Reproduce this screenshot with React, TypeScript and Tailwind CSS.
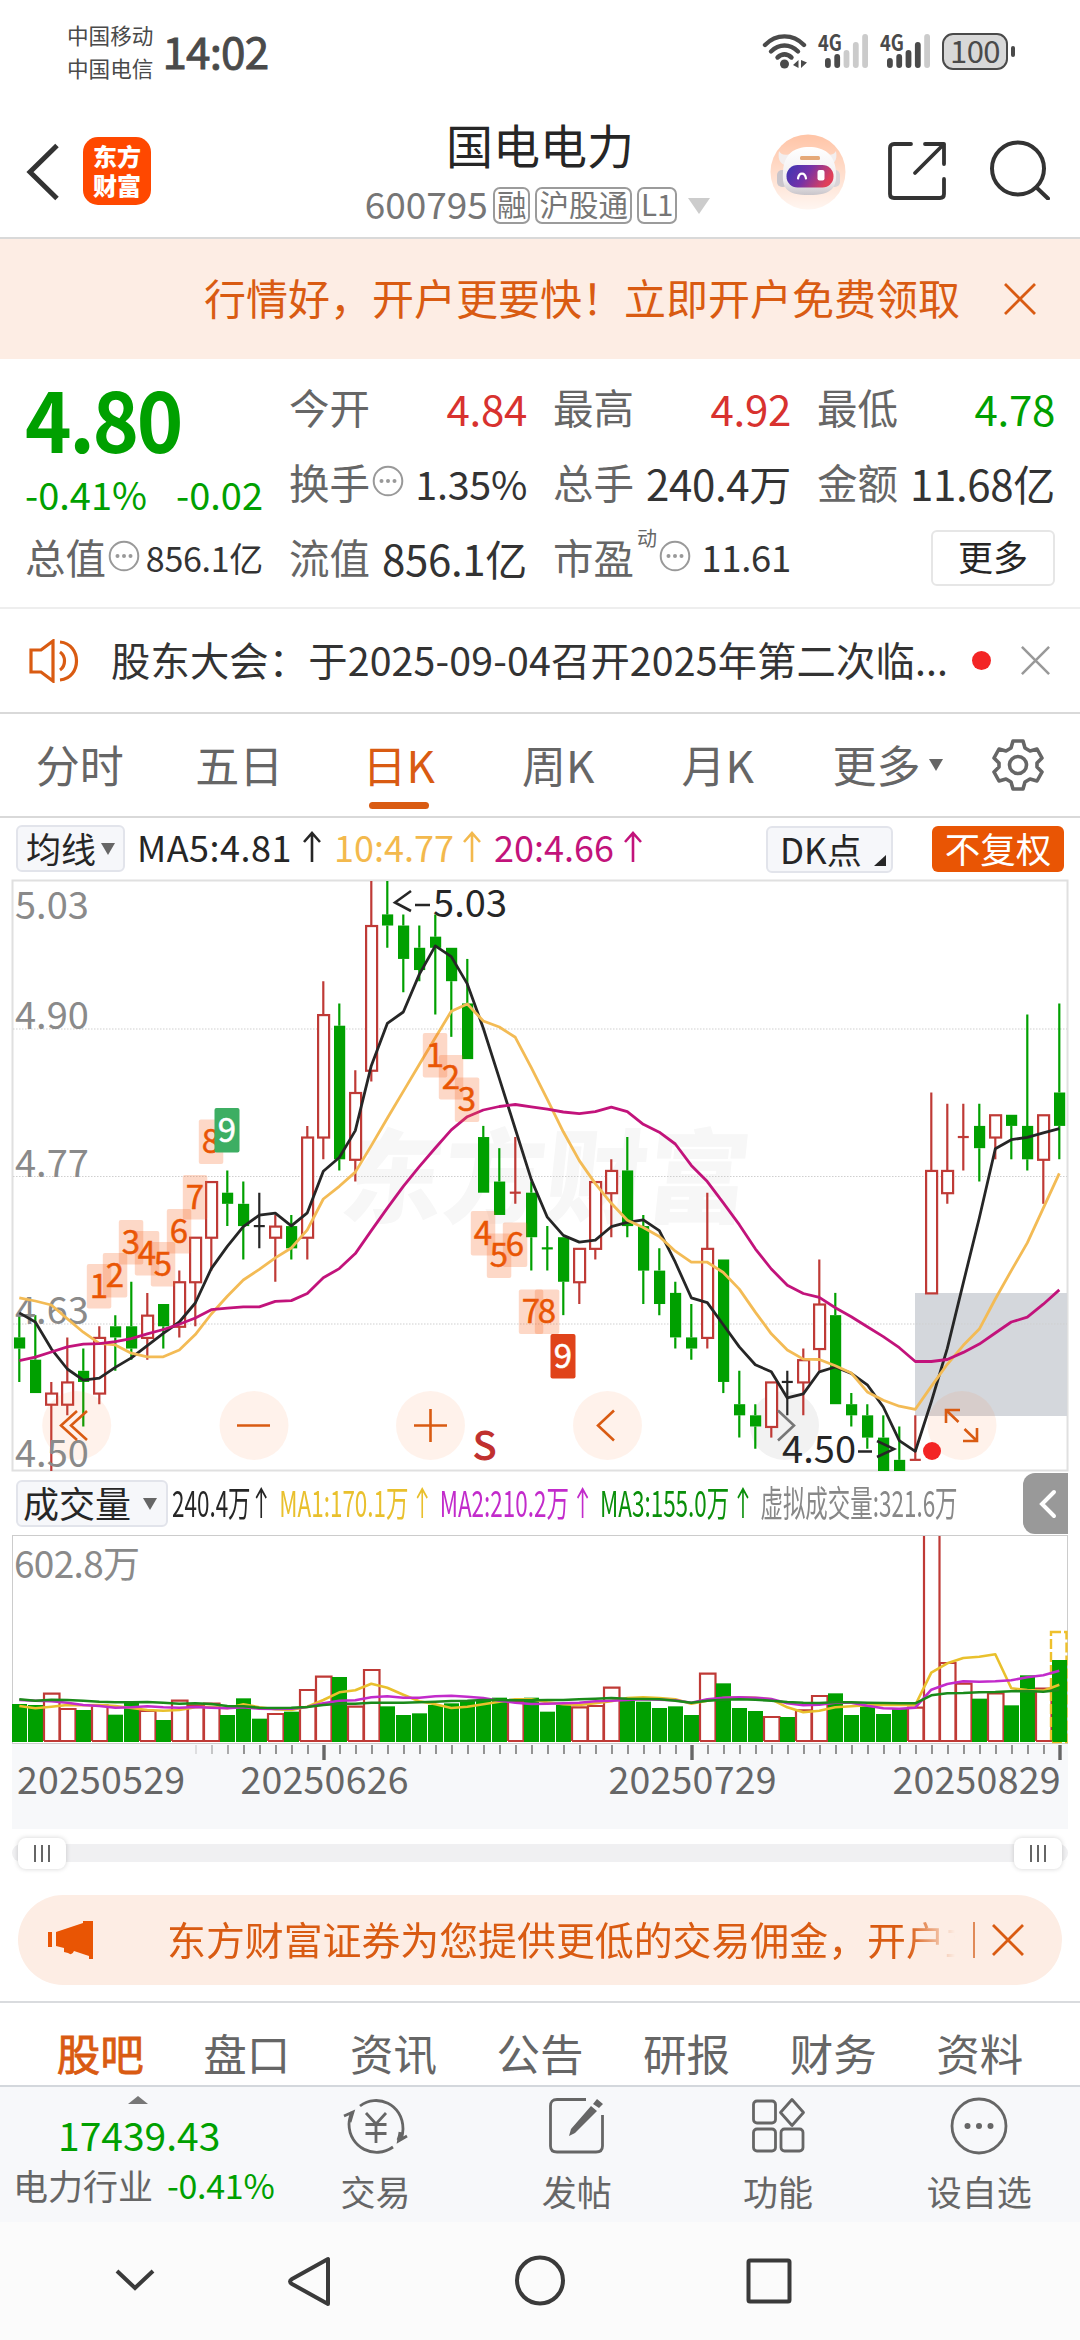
import type { ReactNode } from "react";
import clsx from "clsx";

type Kind = "up" | "down" | "flat";
// high, low, body top, body bottom (all in cents), kind
type Candle = [number, number, number, number, Kind];

const candles: Candle[] = [
    [464, 458, 462, 461, "down"],
    [464, 457, 460, 457, "down"],
    [458, 450, 457, 456, "up"],
    [462, 455, 458, 456, "up"],
    [461, 454, 459, 458, "down"],
    [463, 456, 462, 457, "up"],
    [464, 459, 463, 462, "down"],
    [467, 460, 463, 461, "down"],
    [466, 460, 464, 462, "up"],
    [465, 461, 465, 463, "down"],
    [468, 462, 467, 463, "up"],
    [471, 463, 471, 467, "up"],
    [476, 468, 476, 471, "up"],
    [477, 472, 475, 474, "down"],
    [476, 469, 474, 472, "down"],
    [475, 470, 472, 472, "flat"],
    [473, 467, 472, 471, "up"],
    [473, 469, 472, 470, "down"],
    [481, 469, 480, 471, "up"],
    [494, 478, 491, 480, "up"],
    [492, 477, 490, 478, "down"],
    [486, 476, 484, 478, "up"],
    [503, 485, 499, 486, "up"],
    [503, 497, 500, 499, "down"],
    [500, 493, 499, 496, "down"],
    [499, 494, 497, 495, "down"],
    [500, 491, 498, 497, "down"],
    [497, 489, 497, 494, "down"],
    [496, 487, 492, 487, "down"],
    [481, 475, 480, 475, "down"],
    [479, 473, 476, 473, "down"],
    [480, 474, 475, 475, "up"],
    [476, 468, 475, 471, "down"],
    [472, 468, 470, 470, "down"],
    [471, 464, 471, 467, "down"],
    [470, 465, 470, 467, "up"],
    [476, 469, 476, 470, "up"],
    [478, 471, 477, 475, "up"],
    [480, 471, 477, 472, "down"],
    [473, 465, 472, 468, "down"],
    [470, 464, 468, 465, "down"],
    [467, 461, 466, 462, "down"],
    [465, 460, 462, 461, "down"],
    [475, 461, 470, 462, "up"],
    [469, 457, 469, 458, "down"],
    [459, 453, 456, 455, "down"],
    [456, 452, 455, 454, "down"],
    [458, 453, 458, 454, "up"],
    [459, 455, 458, 458, "flat"],
    [461, 455, 460, 458, "up"],
    [469, 459, 465, 461, "up"],
    [466, 456, 464, 456, "down"],
    [457, 454, 456, 455, "down"],
    [456, 452, 455, 453, "down"],
    [455, 450, 453, 450, "down"],
    [454, 450, 451, 450, "down"],
    [455, 451, 451, 451, "up"],
    [484, 466, 477, 466, "up"],
    [483, 474, 477, 475, "up"],
    [483, 477, 480, 480, "up"],
    [483, 476, 481, 479, "down"],
    [482, 478, 482, 480, "up"],
    [482, 478, 482, 481, "down"],
    [491, 477, 481, 478, "down"],
    [482, 474, 482, 478, "up"],
    [492, 478, 484, 481, "down"],
];

const ma5 = [1120, 1143, 1211, 1262, 1290, 1285, 1258, 1234, 1203, 1172, 1143, 1095, 1008, 952, 902, 873, 868, 900, 867, 762, 727, 659, 495, 388, 359, 264, 192, 219, 288, 400, 527, 655, 783, 878, 924, 941, 936, 902, 891, 885, 912, 992, 1082, 1094, 1150, 1206, 1251, 1269, 1335, 1325, 1269, 1257, 1273, 1302, 1358, 1443, 1470, 1345, 1210, 1044, 880, 705, 682, 676, 665, 654];
const ma10 = [1082, 1090, 1100, 1135, 1169, 1197, 1201, 1222, 1231, 1231, 1214, 1175, 1123, 1078, 1037, 1010, 981, 956, 910, 832, 800, 764, 697, 628, 560, 492, 424, 357, 339, 382, 397, 423, 500, 580, 662, 735, 793, 843, 886, 904, 927, 964, 992, 992, 1018, 1060, 1118, 1173, 1214, 1237, 1238, 1254, 1272, 1320, 1341, 1356, 1364, 1306, 1250, 1202, 1161, 1085, 1013, 943, 855, 767];
const ma20 = [1241, 1232, 1219, 1206, 1199, 1198, 1193, 1185, 1173, 1162, 1149, 1133, 1112, 1108, 1105, 1105, 1091, 1089, 1071, 1031, 1008, 970, 912, 855, 800, 750, 703, 657, 624, 607, 598, 593, 599, 605, 612, 616, 611, 600, 611, 643, 663, 693, 747, 788, 842, 897, 958, 1009, 1050, 1071, 1081, 1107, 1130, 1155, 1180, 1208, 1243, 1243, 1238, 1220, 1199, 1171, 1143, 1131, 1098, 1062];

const volumes = [732, 735, 698, 744, 750, 733, 764, 724, 750, 780, 719, 733, 728, 765, 715, 776, 759, 755, 687, 647, 651, 737, 627, 739, 765, 760, 735, 730, 722, 722, 713, 722, 713, 755, 735, 739, 735, 680, 722, 725, 744, 739, 765, 638, 670, 744, 753, 768, 771, 748, 705, 700, 765, 737, 762, 745, 740, 220, 606, 668, 716, 697, 736, 646, 683, 600];
const vol1 = [738, 745, 740, 735, 736, 735, 738, 744, 750, 752, 750, 742, 740, 745, 733, 742, 748, 750, 740, 720, 697, 691, 671, 683, 704, 724, 733, 744, 740, 733, 725, 718, 718, 727, 733, 735, 730, 724, 714, 712, 714, 718, 731, 722, 714, 712, 713, 718, 742, 757, 752, 742, 739, 736, 735, 735, 735, 638, 610, 594, 590, 583, 685, 690, 692, 674];
const vol2 = [720, 722, 724, 728, 735, 738, 743, 742, 739, 742, 743, 741, 743, 745, 742, 746, 747, 746, 741, 730, 722, 721, 712, 709, 713, 713, 709, 707, 710, 714, 722, 728, 732, 731, 730, 728, 724, 722, 720, 718, 719, 721, 728, 718, 713, 712, 713, 717, 730, 736, 734, 728, 728, 737, 745, 746, 743, 689, 672, 664, 665, 664, 661, 652, 646, 632];
const vol3 = [718, 722, 719, 720, 722, 725, 727, 727, 726, 728, 731, 730, 732, 738, 739, 743, 744, 743, 741, 735, 731, 731, 728, 728, 728, 727, 725, 723, 722, 720, 720, 721, 721, 720, 720, 718, 716, 714, 716, 717, 718, 722, 728, 722, 719, 718, 719, 722, 726, 728, 729, 727, 727, 728, 729, 730, 730, 706, 700, 699, 697, 696, 694, 693, 695, 690];

const RED = "#bf3a36";
const GREEN = "#00a000";
const INK = "#262626";
const ORANGE = "#d95b12";

const cx = (i: number) => 19.3 + 16 * i;
const priceY = (p: number) => 881 + (503 - p) * 11.132;
const volY = (v: number) => 1460 + v / 3;
const maLine = (data: number[]) => data.map((v, i) => `${cx(i)},${(870 + v / 2.529).toFixed(1)}`).join(" ");
const volLine = (data: number[]) => data.map((v, i) => `${cx(i)},${volY(v).toFixed(1)}`).join(" ");
const color = (k: Kind) => (k === "up" ? RED : k === "down" ? GREEN : INK);

// nine-turn counters: candle index, top, digit
const turns: [number, number, string][] = [
    [5, 1264, "1"],
    [6, 1253, "2"],
    [7, 1220, "3"],
    [8, 1231, "4"],
    [9, 1242, "5"],
    [10, 1209, "6"],
    [11, 1175, "7"],
    [12, 1119.5, "8"],
    [26, 1033, "1"],
    [27, 1055, "2"],
    [28, 1077.5, "3"],
    [29, 1211, "4"],
    [30, 1233.5, "5"],
    [31, 1222.5, "6"],
    [32, 1289.5, "7"],
    [33, 1289.5, "8"],
];

function Arrow({ className }: { className?: string }) {
    return (
        <svg viewBox="0 0 20 32" className={clsx("h-8 w-5 shrink-0", className)} fill="none" stroke="currentColor" strokeWidth="2.6">
            <path d="M10 31V2M2 11L10 2L18 11" />
        </svg>
    );
}

function Close({ className }: { className?: string }) {
    return (
        <svg viewBox="0 0 32 32" className={className} fill="none" stroke="currentColor" strokeWidth="2.8">
            <path d="M1 1L31 31M31 1L1 31" />
        </svg>
    );
}

function Info() {
    return (
        <svg viewBox="0 0 32 32" className="mb-[3px] ml-[2px] h-8 w-8 shrink-0 text-[#999]" fill="none" stroke="currentColor" strokeWidth="2">
            <circle cx="16" cy="16" r="14.3" />
            <g fill="currentColor" stroke="none">
                <circle cx="9.5" cy="16" r="2" />
                <circle cx="16" cy="16" r="2" />
                <circle cx="22.5" cy="16" r="2" />
            </g>
        </svg>
    );
}

function Signal({ active }: { active: number }) {
    return (
        <svg viewBox="0 0 52 36" className="mr-[10px] h-9 w-[52px] overflow-visible">
            <text x="0" y="17.5" fontSize="22" fontWeight="700" fill="#4a4a4a" textLength="24" lengthAdjust="spacingAndGlyphs">
                4G
            </text>
            {[10, 14, 18, 26, 34].map((h, i) => (
                <rect key={i} x={7 + i * 9.3} y={35 - h} width="5.8" height={h} rx="2.9" fill={i < active ? "#4a4a4a" : "#cbcbcb"} />
            ))}
        </svg>
    );
}

function StatusBar() {
    return (
        <div className="flex h-[106px] items-start pl-[67px] text-[#4a4a4a]">
            <div className="flex flex-col gap-[11px] pt-[24px] text-[21.6px] leading-[22px]">
                <span>中国移动</span>
                <span>中国电信</span>
            </div>
            <div className="pt-[28px] pl-[9px] text-[44px] leading-[44px] tracking-[-0.8px] [-webkit-text-stroke:0.9px_#4a4a4a]">14:02</div>
            <div className="ml-auto flex items-start pt-[33px] pr-[65px]">
                <svg viewBox="0 0 46 36" className="mr-[10px] h-9 w-[46px]" fill="none" stroke="#4a4a4a" strokeWidth="4.4" strokeLinecap="round">
                    <path d="M3 12C14 .5 31 .5 42 12" />
                    <path d="M9 18.500C17 10.500 28 10.500 36 18.500" />
                    <path d="M15.500 24.500C20 20.500 25 20.500 29.500 24.500" />
                    <circle cx="22.500" cy="31" r="4.500" fill="#4a4a4a" stroke="none" />
                    <path d="M36.500 27V35L31 32ZM39 27V35L45 29.500Z" fill="#4a4a4a" stroke="none" />
                </svg>
                <Signal active={2} />
                <Signal active={4} />
                <div className="flex h-9 items-center">
                    <div className="flex h-[37px] w-[66px] items-center justify-center rounded-[11px] border-2 border-[#4a4a4a] bg-[#d8d8d8] pb-[3px] text-[31px] leading-none tracking-[-0.5px]">
                        100
                    </div>
                    <div className="ml-[3px] h-[11px] w-1 rounded-full bg-[#4a4a4a]" />
                </div>
            </div>
        </div>
    );
}

function Robot() {
    return (
        <svg viewBox="0 0 76 76" className="h-[76px] w-[76px]">
            <defs>
                <linearGradient id="halo" x1="0" y1="0" x2="0" y2="1">
                    <stop offset="0" stopColor="#ffc4a6" />
                    <stop offset="1" stopColor="#fff6f1" />
                </linearGradient>
                <linearGradient id="visor" x1="0" y1="0" x2="1" y2="0.3">
                    <stop offset="0" stopColor="#3a35b4" />
                    <stop offset="0.5" stopColor="#7432a8" />
                    <stop offset="1" stopColor="#e0405a" />
                </linearGradient>
                <linearGradient id="shell" x1="0" y1="0" x2="0" y2="1">
                    <stop offset="0" stopColor="#ffffff" />
                    <stop offset="0.7" stopColor="#f0edef" />
                    <stop offset="1" stopColor="#c9c5ca" />
                </linearGradient>
            </defs>
            <circle cx="38" cy="38" r="37.500" fill="url(#halo)" />
            <path d="M9 17C7 27 12 31 18 32L24 19C15 22 11 21 9 17ZM66 17C68 27 63 31 57 32L51 19C60 22 64 21 66 17Z" fill="#f3eeee" />
            <rect x="7" y="36" width="11" height="17" rx="5" fill="#c9c5cb" />
            <rect x="59" y="36" width="11" height="17" rx="5" fill="#d8d4d8" />
            <path d="M13 38C14 20 24 13 39 13C54 13 65 20 66 38C67 54 62 61 39 61C16 61 12 54 13 38Z" fill="url(#shell)" />
            <rect x="30" y="22" width="20" height="4" rx="1.500" fill="#e5a878" />
            <rect x="16.500" y="31" width="47" height="22.500" rx="11" fill="url(#visor)" />
            <path d="M28 44.500C29 38 35 38 36 44.500" fill="none" stroke="#fff" strokeWidth="2.200" strokeLinecap="round" />
            <rect x="47.500" y="36" width="7" height="10.500" rx="2" fill="#fff" />
        </svg>
    );
}

function Tag({ children }: { children: ReactNode }) {
    return (
        <span className="flex h-[37px] items-center rounded-[7px] border-2 border-[#9b9b9b] px-[2px] pb-[3px] text-[29.5px] leading-none">
            {children}
        </span>
    );
}

function Header() {
    return (
        <div className="flex h-[133px] border-b-2 border-[#d9d9d9]">
            <div className="flex w-[330px] items-start pt-[31px] pl-[26px]">
                <svg viewBox="0 0 34 58" className="mt-[6px] h-[58px] w-[34px]" fill="none" stroke="#333" strokeWidth="5">
                    <path d="M31 2.500L4 29L31 55.500" />
                </svg>
                <div className="ml-[23px] flex h-[68px] w-[68px] flex-col items-center justify-center rounded-[15px] bg-[#ff4800] pb-[3px] text-[24px] leading-[29px] font-black text-white">
                    <span>东方</span>
                    <span>财富</span>
                </div>
            </div>
            <div className="flex w-[420px] flex-col items-center pt-[14px]">
                <div className="text-[47px] leading-[48px] text-[#262626]">国电电力</div>
                <div className="mt-[17px] flex items-center gap-[5px] pr-[5px] text-[#767676]">
                    <span className="pb-1 text-[37px] leading-[37px]">600795</span>
                    <Tag>融</Tag>
                    <Tag>沪股通</Tag>
                    <Tag>L1</Tag>
                    <svg viewBox="0 0 22 16" className="ml-[6px] h-4 w-[22px]">
                        <path d="M0 0H22L11 16Z" fill="#ccc" />
                    </svg>
                </div>
            </div>
            <div className="flex flex-1 items-start pt-[28px] pl-[20px]">
                <Robot />
                <svg viewBox="0 0 60 60" className="mt-[7px] ml-[41px] h-[60px] w-[60px]" fill="none" stroke="#333" strokeWidth="3.800" strokeLinecap="round" strokeLinejoin="round">
                    <path d="M24 3H7Q3 3 3 7V53Q3 57 7 57H53Q57 57 57 53V38" />
                    <path d="M38 3H57V23M57 3L28 32" />
                </svg>
                <svg viewBox="0 0 60 60" className="mt-[6px] ml-[43px] h-[60px] w-[60px]" fill="none" stroke="#333" strokeWidth="4" strokeLinecap="round">
                    <circle cx="28" cy="28.500" r="26" />
                    <path d="M47 48L58 58.500" />
                </svg>
            </div>
        </div>
    );
}

function Banner() {
    return (
        <div className="flex h-[120px] items-center bg-[#fdede4] pb-[1px] pl-[204px] text-[#d95b12]">
            <span className="w-[800px] pb-[4px] text-[42px] leading-none whitespace-nowrap">行情好，开户更要快！立即开户免费领取</span>
            <Close className="h-8 w-8" />
        </div>
    );
}

function Cell({ label, value, extra, tone = "text-[#333]", size = "text-[42px]" }: { label: string; value: string; extra?: ReactNode; tone?: string; size?: string }) {
    return (
        <div className="flex h-[75px] items-center whitespace-nowrap">
            <span className="text-[40.500px] text-[#666]">{label}</span>
            {extra}
            <span className={clsx("ml-auto tracking-[-0.300px]", tone, size)}>{value}</span>
        </div>
    );
}

function Quote() {
    return (
        <div className="grid h-[250px] grid-cols-[238px_238px_238px_238px] content-start gap-x-[26px] border-b-2 border-[#eee] pt-[11px] pl-[25px] leading-none">
            <div className="row-span-2 flex flex-col text-[#00a000]">
                <div className="mt-[5px] origin-left scale-x-[.94] text-[84px] leading-[84px] font-bold tracking-[-2.500px]">4.80</div>
                <div className="mt-[16px] flex justify-between text-[38px] leading-[38px]">
                    <span>-0.41%</span>
                    <span>-0.02</span>
                </div>
            </div>
            <Cell label="今开" value="4.84" tone="text-[#d8322f]" />
            <Cell label="最高" value="4.92" tone="text-[#d8322f]" />
            <Cell label="最低" value="4.78" tone="text-[#00a000]" />
            <Cell label="换手" value="1.35%" extra={<Info />} size="text-[39.500px]" />
            <Cell label="总手" value="240.4万" />
            <Cell label="金额" value="11.68亿" />
            <Cell label="总值" value="856.1亿" extra={<Info />} size="text-[34px]" />
            <Cell label="流值" value="856.1亿" />
            <Cell
                label="市盈"
                value="11.61"
                size="text-[36.500px]"
                extra={
                    <>
                        <sup className="top-0 ml-[3px] self-start pt-[8px] text-[20px] leading-none text-[#666]">动</sup>
                        <Info />
                    </>
                }
            />
            <div className="flex h-[75px] items-center justify-end">
                <span className="flex h-[56px] w-[124px] items-center justify-center rounded-[6px] border-2 border-[#e6e6e6] pb-[4px] text-[35px] text-[#262626]">更多</span>
            </div>
        </div>
    );
}

function News() {
    return (
        <div className="flex h-[105px] items-center border-b-2 border-[#d9d9d9] pl-[29px]">
            <svg viewBox="0 0 52 44" className="h-11 w-[52px]" fill="none" stroke={ORANGE} strokeWidth="3.200">
                <path d="M2 11H12L24 2V42L12 33H2Z" />
                <path d="M31 13C37 17 37 27 31 31M31 3C53 5 53 39 31 41" />
            </svg>
            <span className="ml-[30px] w-[840px] pb-[4px] text-[39.300px] leading-none tracking-[0.150px] whitespace-nowrap text-[#333]">
                股东大会：于2025-09-04召开2025年第二次临...
            </span>
            <span className="ml-[21px] h-[19px] w-[19px] rounded-full bg-[#f32525]" />
            <Close className="ml-[30px] h-[29px] w-[29px] text-[#999]" />
        </div>
    );
}

function Periods() {
    const tabs = ["分时", "五日", "日K", "周K", "月K"];
    return (
        <div className="flex h-[104px] border-b-2 border-[#d9d9d9] text-[44px] leading-none text-[#666]">
            {tabs.map((tab) => (
                <div key={tab} className={clsx("flex w-[159.500px] flex-col items-center pt-[28px]", tab === "日K" && "text-[#d95b12]")}>
                    <span>{tab}</span>
                    {tab === "日K" && <span className="mt-[16px] h-[7px] w-[60px] rounded-full bg-[#d95b12]" />}
                </div>
            ))}
            <div className="flex items-start pt-[28px] pl-[35px]">
                <span>更多</span>
                <svg viewBox="0 0 14 12" className="mt-[17px] ml-[8px] h-3 w-[14px]">
                    <path d="M0 0H14L7 12Z" fill="#666" />
                </svg>
            </div>
            <svg viewBox="0 0 52 52" className="mt-[25px] ml-[49px] h-[52px] w-[52px]" fill="none" stroke="#666" strokeWidth="3.600" strokeLinejoin="round">
                <path d="M21 2H31L33 9L38 12L45 10L50 19L45 24V28L50 33L45 42L38 40L33 43L31 50H21L19 43L14 40L7 42L2 33L7 28V24L2 19L7 10L14 12L19 9Z" />
                <circle cx="26" cy="26" r="8.500" />
            </svg>
        </div>
    );
}

function MaRow() {
    return (
        <div className="flex h-[61px] items-start pt-[7px] pl-4 text-[36px] leading-none whitespace-nowrap">
            <div className="flex h-[47px] w-[109px] items-center rounded-[6px] border-2 border-[#e2e4eb] bg-[#f6f7fa] pb-[3px] pl-[8px] text-[35px] text-[#262626]">
                均线
                <svg viewBox="0 0 14 12" className="mt-[4px] ml-[5px] h-3 w-[14px]">
                    <path d="M0 0H14L7 12Z" fill="#666" />
                </svg>
            </div>
            <div className="flex h-[44px] items-center text-[#262626]">
                <span className="ml-[12px] w-[165px] pb-[2px] tracking-[0.500px]">MA5:4.81</span>
                <Arrow />
            </div>
            <div className="flex h-[44px] items-center text-[#f3b94d]">
                <span className="ml-[12px] w-[128px] pb-[2px]">10:4.77</span>
                <Arrow />
            </div>
            <div className="flex h-[44px] items-center text-[#c2137b]">
                <span className="ml-[12px] w-[129px] pb-[2px]">20:4.66</span>
                <Arrow />
            </div>
            <div className="mt-[1px] ml-auto flex h-[47px] w-[127px] items-center justify-between rounded-[6px] border-2 border-[#e2e4eb] bg-[#f6f7fa] pr-[5px] pb-[3px] pl-[12px] text-[35px] text-[#262626]">
                DK点
                <svg viewBox="0 0 12 11" className="mt-[24px] h-[11px] w-3">
                    <path d="M12 0V11H0Z" fill="#262626" />
                </svg>
            </div>
            <div className="mt-[1px] mr-4 ml-[39px] flex h-[46px] w-[132px] items-center justify-center rounded-[6px] bg-[#e95504] pb-[3px] text-[35.500px] text-white">不复权</div>
        </div>
    );
}

function CandleMark({ candle, index }: { candle: Candle; index: number }) {
    const [high, low, top, bottom, kind] = candle;
    const x = cx(index);
    const y1 = priceY(top);
    const y2 = priceY(bottom);
    const stroke = color(kind);
    return (
        <g stroke={stroke} strokeWidth="2.2">
            <path d={`M${x} ${priceY(high)}V${y1}M${x} ${y2}V${priceY(low)}`} fill="none" />
            {y1 === y2 ? (
                <path d={`M${x - 5.5} ${y1}H${x + 5.5}`} />
            ) : kind === "up" ? (
                <rect x={x - 5.2} y={y1 + 0.5} width="11" height={y2 - y1} fill="#fff" />
            ) : (
                <rect x={x - 5.3} y={y1} width="11.2" height={y2 - y1} fill={stroke} stroke="none" />
            )}
        </g>
    );
}

function PriceChart() {
    return (
        <svg viewBox="0 879 1080 594" className="block h-[594px] w-[1080px]">
            <text x="338" y="1215" fontSize="102" fontWeight="900" fill="#f7f7f7" textLength="408" transform="skewX(-6)" style={{ transformOrigin: "338px 1215px" }}>
                东方财富
            </text>
            <rect x="12.500" y="880.500" width="1055" height="590" fill="none" stroke="#e0e0e0" strokeWidth="2" />
            <rect x="915" y="1293" width="152" height="123" fill="#d4d7dc" />
            {[1029, 1176.5, 1324].map((y) => (
                <path key={y} d={`M13 ${y}H1067`} stroke="#cfcfcf" strokeDasharray="1.500 1.500" />
            ))}
            <circle cx="784.500" cy="1425.500" r="34.500" fill="#f2f2f2" />
            {candles.map((c, i) => (
                <CandleMark key={i} candle={c} index={i} />
            ))}
            <g fill="#ff6a20" fillOpacity="0.09">
                {[76.7, 254, 430.5, 607.5, 962].map((x) => (
                    <circle key={x} cx={x} cy="1425.500" r="34.500" />
                ))}
            </g>
            <g fontSize="38" fill="#8a8a8a">
                <text x="15" y="918.500">5.03</text>
                <text x="15" y="1028.500">4.90</text>
                <text x="15" y="1176.500">4.77</text>
                <text x="15" y="1324">4.63</text>
                <text x="15" y="1467">4.50</text>
            </g>
            <g fill="none" strokeWidth="2.800" strokeLinejoin="round">
                <polyline points={maLine(ma5)} stroke={INK} />
                <polyline points={maLine(ma10)} stroke="#f3bb55" />
                <polyline points={maLine(ma20)} stroke="#c2137b" />
            </g>
            {turns.map(([i, top, digit]) => (
                <g key={i}>
                    <rect x={cx(i) - 12.5} y={top} width="24.500" height="44.500" rx="2" fill="#f96a28" fillOpacity="0.26" />
                    <text x={cx(i) - 0.5} y={top + 33.5} textAnchor="middle" fontSize="33" fill="#e95504" stroke="#e95504" strokeWidth="0.5">
                        {digit}
                    </text>
                </g>
            ))}
            <g textAnchor="middle" fontSize="33" fill="#fff" stroke="#fff" strokeWidth="0.500">
                <rect x="214.500" y="1108" width="25" height="44.500" rx="2" fill="#3dae63" stroke="none" />
                <text x="227" y="1142">9</text>
                <rect x="550.500" y="1334" width="25" height="44.500" rx="2" fill="#e0431a" stroke="none" />
                <text x="563" y="1368">9</text>
            </g>
            <g fill="none" stroke={ORANGE} strokeWidth="2.600">
                <path d="M77 1411L61 1425.500L77 1440M87 1411L71 1425.500L87 1440" />
                <path d="M237 1425.500H270M414 1425.500H447M430.500 1409V1442" />
                <path d="M614 1410.500L598 1425.500L614 1440.500" />
                <path d="M960 1410H946V1423M946 1410L958.500 1422M963 1441H977V1428M977 1441L964.500 1429" />
                <path d="M778 1410.500L794 1425.500L778 1440.500" stroke="#777" />
            </g>
            <text x="473" y="1459.500" fontSize="39" fill="#c0302f" stroke="#c0302f" strokeWidth="1.200">
                S
            </text>
            <g fontSize="38" fill={INK}>
                <text x="433" y="916.500" textLength="74">5.03</text>
                <text x="782" y="1463" textLength="74">4.50</text>
                <g fill="none" stroke={INK} strokeWidth="2.600">
                    <path d="M411 891L395 902.500L411 911M415 905H430" />
                    <path d="M858 1451.500H872M877 1441L894 1449L877 1457" />
                </g>
            </g>
            <circle cx="932" cy="1451" r="9" fill="#f32525" />
        </svg>
    );
}

function VolumeHeader() {
    return (
        <div className="flex h-[62px] items-start pl-4 leading-none">
            <div className="mt-[7px] flex h-[47px] w-[152px] shrink-0 items-center rounded-[6px] border-2 border-[#e2e4eb] bg-[#f6f7fa] pb-[3px] pl-[5px] text-[36px] whitespace-nowrap text-[#262626]">
                成交量
                <svg viewBox="0 0 14 12" className="mt-[3px] ml-[12px] h-3 w-[14px]">
                    <path d="M0 0H14L7 12Z" fill="#666" />
                </svg>
            </div>
            <div className="mt-[10px] ml-[4px] flex h-[40px] w-[851px] text-[36px]">
                <div className="flex w-[1280px] shrink-0 origin-left scale-x-[.624] items-center whitespace-nowrap">
                    <span className="w-[133px] pb-1 text-[#262626]">240.4万</span>
                    <Arrow className="text-[#262626]" />
                    <span className="ml-[19px] w-[219px] pb-1 text-[#e9c02d]">MA1:170.1万</span>
                    <Arrow className="text-[#e9c02d]" />
                    <span className="ml-[18px] w-[219px] pb-1 text-[#c22bcb]">MA2:210.2万</span>
                    <Arrow className="text-[#c22bcb]" />
                    <span className="ml-[18px] w-[219px] pb-1 text-[#0a8f0a]">MA3:155.0万</span>
                    <Arrow className="text-[#0a8f0a]" />
                    <span className="ml-[18px] pb-1 text-[#888]">虚拟成交量:321.6万</span>
                </div>
            </div>
            <div className="flex h-[61px] w-[45px] shrink-0 items-center justify-center rounded-l-[12px] bg-[#999]">
                <svg viewBox="0 0 18 30" className="ml-1 h-[30px] w-[18px]" fill="none" stroke="#fff" strokeWidth="4" strokeLinecap="round">
                    <path d="M15 3L3 15L15 27" />
                </svg>
            </div>
        </div>
    );
}

function VolumeChart() {
    const base = 1742;
    return (
        <svg viewBox="0 1535 1080 294" className="block h-[294px] w-[1080px]">
            <rect x="12" y="1743.500" width="1056" height="86" fill="#f7f8fa" />
            <rect x="12.500" y="1535.500" width="1055" height="208" fill="none" stroke="#ccc" />
            <text x="14" y="1578" fontSize="37" fill="#8a8a8a" textLength="126">
                602.8万
            </text>
            {volumes.map((v, i) => {
                const top = volY(v);
                if (candles[i][4] !== "up") {
                    return <rect key={i} x={12 + 16 * i} y={top} width="15" height={base - top} fill={GREEN} />;
                }
                // taller than the panel: leave the bar open at the top edge
                const sides = top < 1536 ? `V1536M${59.5 + 16 * (i - 2)} 1536` : `V${top + 1}H${59.5 + 16 * (i - 2)}`;
                return <path key={i} d={`M${44 + 16 * (i - 2)} ${base - 1}${sides}V${base - 1}H${44 + 16 * (i - 2)}`} fill="#fff" stroke={RED} strokeWidth="2.200" />;
            })}
            <rect x="1051" y="1632" width="15.500" height="110" fill="none" stroke="#eec02c" strokeWidth="2.400" strokeDasharray="10 3" />
            <rect x="1052.500" y="1660" width="14.500" height="82" fill={GREEN} />
            <g fill="none" strokeWidth="2.600" strokeLinejoin="round">
                <polyline points={volLine(vol1)} stroke="#e9c02d" />
                <polyline points={volLine(vol2)} stroke="#c22bcb" />
                <polyline points={volLine(vol3)} stroke="#1a8a1a" />
            </g>
            {volumes.map((_, i) => {
                if (i < 11) return null;
                const major = i === 19 || i === 42 || i === 65;
                return <path key={i} d={`M${cx(i) + 0.7} 1745V${major ? 1760 : 1754}`} stroke={major ? "#666" : "#888"} strokeWidth={major ? 3.4 : 1.8} opacity={i < 14 ? (i - 10) * 0.25 : 1} />;
            })}
            <g fontSize="37.500" fill="#666">
                <text x="17" y="1793.500" textLength="168">20250529</text>
                <text x="240.500" y="1793.500" textLength="168">20250626</text>
                <text x="608.500" y="1793.500" textLength="168">20250729</text>
                <text x="892.500" y="1793.500" textLength="168">20250829</text>
            </g>
        </svg>
    );
}

function Handle() {
    return (
        <div className="flex h-[31px] w-[48px] items-center justify-center gap-[5px] rounded-[8px] bg-white shadow-[0_0_5px_rgba(0,0,0,0.18)]">
            <span className="h-[17px] w-[2px] bg-[#666]" />
            <span className="h-[17px] w-[2px] bg-[#666]" />
            <span className="h-[17px] w-[2px] bg-[#666]" />
        </div>
    );
}

function RangeSlider() {
    return (
        <div className="flex h-[66px] items-start px-3 pt-[15px]">
            <div className="flex h-[18px] w-full items-center justify-between rounded-full bg-[#f0f0f2] px-[6px]">
                <Handle />
                <Handle />
            </div>
        </div>
    );
}

function Promo() {
    return (
        <div className="flex h-[108px] items-start border-b-2 border-[#d9dbde] pl-[18px]">
            <div className="flex h-[90px] w-[1044px] items-center rounded-full bg-[#fdede4] pl-[30px] text-[#d95b12]">
                <svg viewBox="0 0 46 40" className="h-10 w-[46px]" fill="#e95504">
                    <path d="M0 12H4V27H0ZM8 12L35 3V1H45V39H41V36L26 31Q24 36 20 33L16 32V28L8 26Z" />
                </svg>
                <div className="ml-[73px] w-[788px] overflow-hidden [mask-image:linear-gradient(to_right,#000_94%,transparent)]">
                    <div className="pb-[5px] text-[38.900px] leading-[48px] whitespace-nowrap">东方财富证券为您提供更低的交易佣金，开户立享</div>
                </div>
                <span className="ml-[18px] h-9 w-[2px] bg-[#e08a58]" />
                <Close className="ml-[17px] h-8 w-8" />
            </div>
        </div>
    );
}

function Sections() {
    const tabs = ["股吧", "盘口", "资讯", "公告", "研报", "财务", "资料"];
    return (
        <div className="flex h-[84px] border-b-2 border-[#d3d7dc] px-[27px] pt-[28px] text-[43.500px] leading-none text-[#666]">
            {tabs.map((tab, i) => (
                <span key={tab} className={clsx("flex-1 text-center", i === 0 && "text-[#d95b12] [-webkit-text-stroke:0.8px_#d95b12]")}>
                    {tab}
                </span>
            ))}
        </div>
    );
}

function Action({ label, children }: { label: string; children: ReactNode }) {
    return (
        <div className="flex flex-1 flex-col items-center">
            <svg viewBox="0 0 64 60" className="mt-[9px] h-[60px] w-16 overflow-visible" fill="none" stroke="#666" strokeWidth="2.800">
                {children}
            </svg>
            <span className="mt-[17px] text-[35px]">{label}</span>
        </div>
    );
}

function BottomBar() {
    return (
        <div className="flex h-[135px] bg-[#f7f8fa] leading-none text-[#666]">
            <div className="w-[275px] shrink-0">
                <svg viewBox="0 0 20 8" className="mt-[9px] ml-[128px] h-2 w-5">
                    <path d="M10 0L20 8H0Z" fill="#777" />
                </svg>
                <div className="mt-[11px] pl-[58px] text-[39px] leading-[39px] text-[#00a000]">17439.43</div>
                <div className="mt-[13px] flex items-center pl-[13px] text-[35px] whitespace-nowrap">
                    电力行业
                    <span className="ml-[14px] text-[34px] tracking-[-0.300px] text-[#00a000]">-0.41%</span>
                </div>
            </div>
            <Action label="交易">
                <path d="M17 10C34-3 60 8 60 33Q60 38 58 44M55 44L57 38M64 40L55.500 45L57 36" transform="translate(-1 0)" />
                <path d="M48 51C30 64 4 52 4 28Q4 23 7 16M-1 20L8 16L5 26" transform="translate(1 0)" />
                <path d="M22 17L32 28L42 17M32 28V47M21.500 28.500H42.500M21.500 37.500H42.500" />
            </Action>
            <Action label="发帖">
                <path d="M41 3.500H12Q5.500 3.500 5.500 10V50Q5.500 56 12 56H51Q57.500 56 57.500 50V19" />
                <path d="M52 3L58 8L54 12L48 8ZM46 10L52 15L30 37L24 40L26 33Z" fill="#666" stroke="none" />
            </Action>
            <Action label="功能">
                <rect x="7.500" y="5" width="22" height="22" rx="3.500" />
                <path d="M46 3.500L57.500 16.500L46 29.500L34.500 16.500Z" strokeLinejoin="round" />
                <rect x="7.500" y="33" width="22" height="22" rx="3.500" />
                <rect x="35" y="33" width="22" height="22" rx="3.500" />
            </Action>
            <Action label="设自选">
                <circle cx="32" cy="30" r="27" />
                <g fill="#666" stroke="none">
                    <circle cx="20.500" cy="30" r="3" />
                    <circle cx="32" cy="30" r="3" />
                    <circle cx="43.500" cy="30" r="3" />
                </g>
            </Action>
        </div>
    );
}

function SystemNav() {
    return (
        <div className="h-[118px] bg-[#fbfbfb]">
            <svg viewBox="0 2222 1080 118" className="block h-[118px] w-[1080px]" fill="none" stroke="#3a3a3a" strokeWidth="4">
                <path d="M117 2271L135 2288L153 2271" />
                <path d="M328 2259V2304L292 2284Q288 2281.500 292 2279Z" strokeLinejoin="round" />
                <circle cx="540" cy="2280.500" r="23" />
                <rect x="748.500" y="2260.500" width="41" height="41" rx="1.500" />
            </svg>
        </div>
    );
}

export default function App() {
    return (
        <div className="h-[2340px] w-[1080px] overflow-hidden bg-white font-['Noto_Sans_CJK_SC',sans-serif]">
            <StatusBar />
            <Header />
            <Banner />
            <Quote />
            <News />
            <Periods />
            <MaRow />
            <PriceChart />
            <VolumeHeader />
            <VolumeChart />
            <RangeSlider />
            <Promo />
            <Sections />
            <BottomBar />
            <SystemNav />
        </div>
    );
}
